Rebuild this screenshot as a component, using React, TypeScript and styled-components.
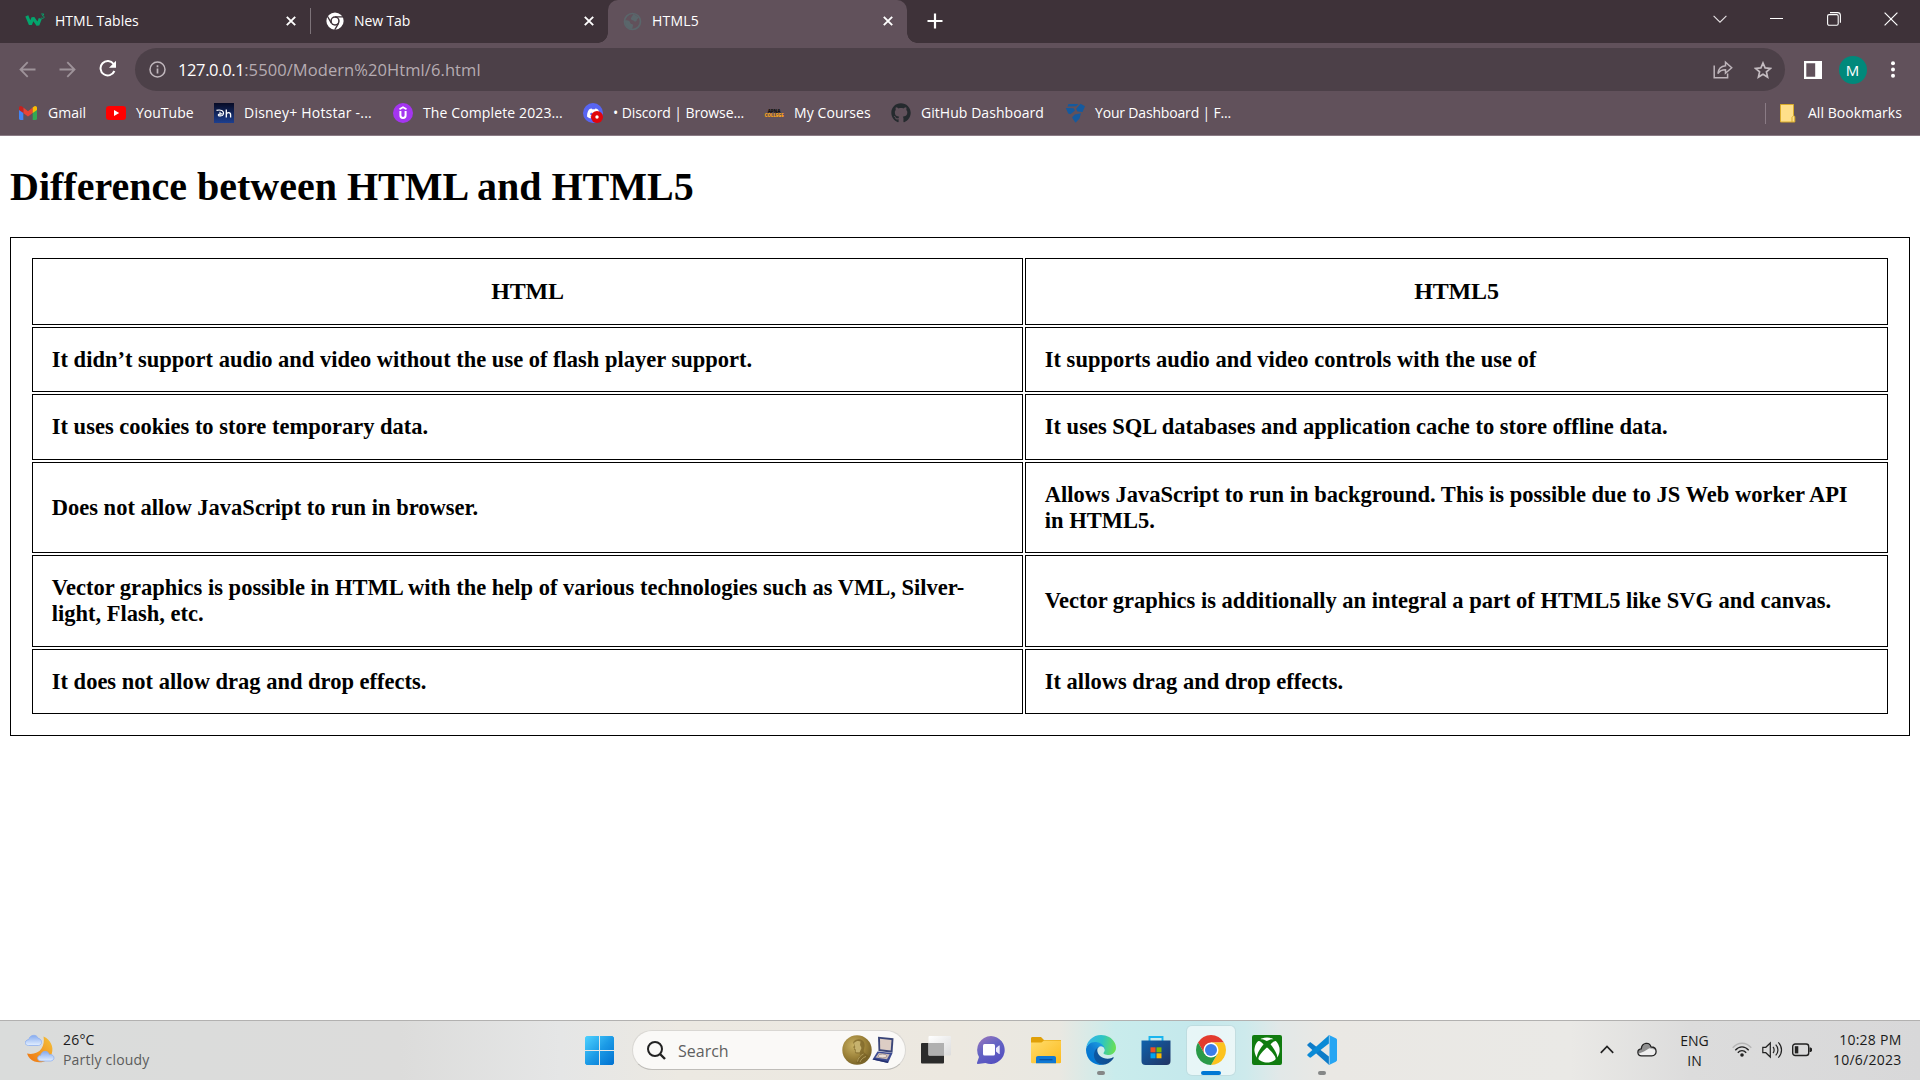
import React from "react";
import styled, { createGlobalStyle } from "styled-components";
import { FaDiscord, FaGithub, FaXbox } from "react-icons/fa";

const GlobalStyle = createGlobalStyle`
  * { box-sizing: border-box; }
  html, body { margin: 0; padding: 0; overflow: hidden; background: #fff; }
  svg { display: block; flex: none; }
`;

const ui = `"Open Sans", "Noto Sans", sans-serif`;

const Screen = styled.div`
  width: 1920px;
  height: 1080px;
  display: flex;
  flex-direction: column;
  background: #fff;
  font-family: ${ui};
  font-size: 14px;
  line-height: 20px;
`;

/* ---------- browser chrome ---------- */

const TabStrip = styled.div`
  height: 43px;
  display: flex;
  background: #3e3239;
  color: #fff;
`;

const Tab = styled.div<{ $width: number; $active?: boolean }>`
  position: relative;
  width: ${(p) => p.$width}px;
  height: 43px;
  padding: 0 14.5px 1px 15px;
  display: flex;
  align-items: center;
  border-radius: 10px 10px 0 0;
  background: ${(p) => (p.$active ? "#61515b" : "transparent")};

  &::before,
  &::after {
    content: "";
    display: ${(p) => (p.$active ? "block" : "none")};
    position: absolute;
    bottom: 0;
    width: 10px;
    height: 10px;
  }
  &::before {
    left: -10px;
    background: radial-gradient(circle at 0 0, transparent 9.5px, #61515b 10px);
  }
  &::after {
    right: -10px;
    background: radial-gradient(circle at 100% 0, transparent 9.5px, #61515b 10px);
  }
`;

const FirstTab = styled(Tab)`
  padding-left: 25px;
`;

const TabIcon = styled.span`
  width: 20px;
  flex: none;
`;

const TabTitle = styled.span<{ $gap: number; $spacing?: number }>`
  flex: 1;
  margin-left: ${(p) => p.$gap}px;
  letter-spacing: ${(p) => p.$spacing ?? 0}px;
  white-space: nowrap;
`;

const TabDivider = styled.div`
  width: 1px;
  height: 26px;
  margin-top: 8px;
  background: #7d7379;
`;

const NewTabButton = styled.div`
  padding: 13px 0 0 20px;
`;

const WindowControls = styled.div`
  margin-left: auto;
  height: 37px;
  display: flex;
  align-items: center;
  gap: 43.5px;
  padding-right: 22px;
`;

const Toolbar = styled.div`
  height: 53px;
  padding: 0 20px 0 19px;
  display: flex;
  align-items: center;
  background: #61515b;
`;

const NavButtons = styled.div`
  width: 116px;
  display: flex;
  align-items: center;
  gap: 23px;
  padding-bottom: 1px;
`;

const AddressBar = styled.div`
  width: 1650px;
  height: 43px;
  padding: 0 13px 0 14px;
  display: flex;
  align-items: center;
  border-radius: 22px;
  background: #4c4048;
`;

const Url = styled.div`
  flex: 1;
  margin-left: 12px;
  font-size: 16.5px;
  line-height: 24px;
  letter-spacing: 0.08px;
  color: #b6acb2;
`;

const Host = styled.span`
  letter-spacing: -0.38px;
  color: #fff;
`;

const AddressActions = styled.div`
  display: flex;
  align-items: center;
  gap: 21px;
`;

const ToolbarActions = styled.div`
  flex: 1;
  display: flex;
  align-items: center;
  padding-left: 18.5px;
`;

const Avatar = styled.div`
  width: 28px;
  height: 28px;
  margin: 0 23px 0 17px;
  border-radius: 50%;
  background: #00897b;
  color: #fff;
  font-size: 15px;
  line-height: 28px;
  text-align: center;
`;

const BookmarkBar = styled.div`
  height: 40px;
  padding: 0 18px 5px 18px;
  display: flex;
  align-items: center;
  background: #61515b;
  border-bottom: 1px solid #8a7b85;
  color: #fff;
`;

const Bookmark = styled.div<{ $width: number; $spacing?: number }>`
  width: ${(p) => p.$width}px;
  display: flex;
  align-items: center;
  gap: 10px;
  white-space: nowrap;
  letter-spacing: ${(p) => p.$spacing ?? 0}px;
`;

const AllBookmarks = styled.div`
  margin-left: auto;
  height: 21px;
  padding-left: 12px;
  display: flex;
  align-items: center;
  gap: 10px;
  letter-spacing: 0.06px;
  border-left: 1px solid #8a7b85;
`;

/* ---------- page ---------- */

const Page = styled.main`
  height: 884px;
  padding: 0 10px;
  font-family: "Liberation Serif", "Times New Roman", serif;
  color: #000;
`;

const Heading = styled.h1`
  height: 101px;
  margin: 0;
  padding-top: 28px;
  font-size: 40px;
  line-height: 46px;
`;

const Table = styled.table`
  width: 1900px;
  height: 499px;
  display: block;
  border: 1px solid #000;
  padding: 20px 21px;
`;

const Rows = styled.tbody`
  display: grid;
  gap: 2px;
  grid-template-rows: 67px 65px 66px 91px 92px 65px;
`;

const Row = styled.tr`
  display: grid;
  grid-template-columns: 991px 863px;
  gap: 2px;
`;

const HeadCell = styled.th`
  display: flex;
  align-items: center;
  justify-content: center;
  border: 1px solid #000;
  font-size: 24px;
  line-height: 27px;
  letter-spacing: -0.15px;
`;

const Cell = styled.td`
  display: flex;
  align-items: center;
  border: 1px solid #000;
  padding: 0 19px 0 18.75px;
  font-size: 22.5px;
  font-weight: 700;
  line-height: 26px;
`;

/* ---------- taskbar ---------- */

const Taskbar = styled.div`
  height: 60px;
  display: flex;
  border-top: 1px solid #b2b1b0;
  background: linear-gradient(
    90deg,
    #dadcdb 0,
    #dcdcdb 400px,
    #e5e6e6 560px,
    #ece9e2 680px,
    #ece8e0 960px,
    #e9e8e2 1060px,
    #c9ecec 1115px,
    #c4e8ec 1200px,
    #cdeaec 1245px,
    #e2e8e8 1280px,
    #eae8e4 1330px,
    #eae9e6 1570px,
    #dcdcdc 1690px,
    #d8d8d9 1920px
  );
  color: #1b1b1b;
`;

const Weather = styled.div`
  width: 585px;
  padding: 9px 0 0 24px;
  display: flex;
  gap: 8px;
`;

const WeatherIconBox = styled.div`
  padding: 4px 0 0 1px;
`;

const WeatherText = styled.div`
  display: flex;
  flex-direction: column;
  letter-spacing: 0.2px;
  margin-left: -1px;
`;

const Muted = styled.span`
  color: #5c5c5c;
`;

const SearchBox = styled.div`
  width: 274px;
  height: 40px;
  margin: 9px 0 0 14px;
  padding: 0 11px 0 14px;
  display: flex;
  align-items: center;
  border: 1px solid #d9d7d3;
  border-bottom-color: #bfbdb9;
  border-radius: 20px;
  background: #faf9f7;
`;

const SearchText = styled.span`
  flex: 1;
  margin-left: 12px;
  padding-top: 2px;
  font-size: 16px;
  line-height: 24px;
  color: #5f5f5f;
`;

const AppRow = styled.div`
  display: flex;
  gap: 7.1px;
  padding: 5px 0 0 6px;
`;

const AppTile = styled.div<{ $active?: boolean }>`
  width: 48px;
  height: 49px;
  padding-top: 9px;
  display: flex;
  flex-direction: column;
  align-items: center;
  justify-content: space-between;
  border-radius: 5px;
  background: ${(p) => (p.$active ? "rgba(255,255,255,0.6)" : "transparent")};
  box-shadow: ${(p) => (p.$active ? "0 0 0 1px rgba(180,200,204,0.35)" : "none")};
`;

const Indicator = styled.div<{ $active?: boolean }>`
  width: ${(p) => (p.$active ? 20 : 8)}px;
  height: 4px;
  border-radius: 2px;
  background: ${(p) => (p.$active ? "#0078d4" : "#858787")};
`;

const XboxTile = styled.div`
  width: 30px;
  height: 30px;
  padding: 2px;
  border-radius: 2px;
  background: #107c10;
  color: #fff;
`;

const Tray = styled.div`
  margin-left: auto;
  display: flex;
  align-items: flex-start;
  padding-right: 18.5px;
`;

const TrayIcon = styled.div<{ $top: number; $width: number }>`
  width: ${(p) => p.$width}px;
  padding-top: ${(p) => p.$top}px;
`;

const TrayText = styled.div<{ $align: "center" | "right"; $width: number }>`
  width: ${(p) => p.$width}px;
  padding-top: 10px;
  text-align: ${(p) => p.$align};
`;

const Language = styled(TrayText)`
  margin-right: 15px;
`;

const Clock = styled(TrayText)`
  padding-top: 9px;
  letter-spacing: 0.25px;
`;

/* ---------- icons ---------- */

const CloseIcon = () => (
  <svg width="10" height="10" viewBox="0 0 10 10" stroke="#fff" strokeWidth="1.9">
    <path d="M.8.8l8.4 8.4M9.2.8L.8 9.2" />
  </svg>
);

const W3Icon = () => (
  <svg width="20" height="16" viewBox="0 0 20 16" fill="none" stroke="#04a56d">
    <path d="M1.800 2.800L5.400 11.500 8 4.800 12.800 11.800 15.300 5.500" strokeWidth="3.200" strokeLinejoin="bevel" />
    <path d="M16.200 1h2.600l-1.400 1.800c1.400 0 1.900.8 1.600 1.700-.4 1.100-2 1.100-2.900.3" strokeWidth="1" />
  </svg>
);

const ChromeMono = () => (
  <svg width="18" height="18" viewBox="0 0 48 48">
    <circle cx="24" cy="24" r="23" fill="#fff" />
    <circle cx="24" cy="24" r="12.5" fill="#3e3239" />
    <circle cx="24" cy="24" r="8.5" fill="#fff" />
    <path d="M24 12.8h21M14.3 29.6L3.8 11.4M33.7 29.6L23.2 47.8" stroke="#3e3239" strokeWidth="3.5" />
  </svg>
);

const GlobeIcon = () => (
  <svg width="19" height="19" viewBox="0 0 19 19">
    <circle cx="9.500" cy="9.500" r="8" fill="none" stroke="#5a666b" strokeWidth="1.700" />
    <path d="M2 8.500c2.500-1 5 .3 5.200 2.300.2 1.500 1.800 1 2.500 1.700.8 1-.2 2-.5 4.500C5 17 1.500 13 2 8.500zM10.500 2l5.300 3.500-1.500 1.800c-.8.700-.2 1.900-1.600 2.200-1.600.2-1.700-1-3.200-1.300-1.400-.4-2.200-1.500-1.200-2.700z" fill="#5a666b" />
  </svg>
);

const ArrowIcon = ({ flip }: { flip?: boolean }) => (
  <svg width="17" height="17" viewBox="0 0 17 17" fill="none" stroke="#9e939a" strokeWidth="1.8">
    <path d={flip ? "M.5 8.5h15M8.3 1.2l7.2 7.3-7.2 7.3" : "M16.5 8.5h-15M8.7 1.2L1.5 8.5l7.2 7.3"} />
  </svg>
);

const ReloadIcon = () => (
  <svg width="20" height="18" viewBox="0 0 20 18">
    <path d="M14.600 4A7.200 7.200 0 1 0 15.400 11" fill="none" stroke="#fff" strokeWidth="2" />
    <path d="M17 .8v7H10z" fill="#fff" />
  </svg>
);

const InfoIcon = () => (
  <svg width="17" height="17" viewBox="0 0 17 17" fill="none" stroke="#c0b7bd">
    <circle cx="8.5" cy="8.5" r="7.5" strokeWidth="1.5" />
    <path d="M8.5 7.5v5M8.5 4.3v1.9" strokeWidth="1.7" />
  </svg>
);

const ShareIcon = () => (
  <svg width="20" height="19" viewBox="0 0 20 19" fill="none" stroke="#bdb4ba" strokeWidth="1.5">
    <path d="M1.2 5.6v12.2h13.4v-4.3" />
    <path d="M4.9 13.6c.5-5 3.4-7.4 7.6-7.8V2.2l6.2 5.6-6.2 5.4V9.8c-3.6 0-5.8 1-7.6 3.8z" />
  </svg>
);

const StarIcon = () => (
  <svg width="18" height="18" viewBox="0 0 18 18" fill="none" stroke="#c3bbc0" strokeWidth="1.7">
    <path d="M9 2l2.1 4.9 5.3.5-4 3.5 1.2 5.2L9 13.3l-4.6 2.8 1.2-5.2-4-3.5 5.3-.5z" />
  </svg>
);

const SidePanelIcon = () => (
  <svg width="18" height="18" viewBox="0 0 18 18">
    <path d="M0 0h18v18H0zM2.3 2.3v13.4h8.9V2.3z" fill="#fff" fillRule="evenodd" />
  </svg>
);

const GmailIcon = () => (
  <svg width="20" height="20" viewBox="0 0 20 20">
    <path d="M1 5v10.6c0 .8.5 1.4 1.3 1.4h3V9L1 5z" fill="#4285f4" />
    <path d="M19 5v10.6c0 .8-.5 1.4-1.3 1.4h-3V9L19 5z" fill="#34a853" />
    <path d="M5.3 10V4.6L10 8.2l4.7-3.6V10L10 13.5z" fill="#ea4335" />
    <path d="M1 7V5c0-1.9 2-2.5 3.4-1.3l.9.8V10z" fill="#c5221f" />
    <path d="M19 7V5c0-1.9-2-2.5-3.4-1.3l-.9.8V10z" fill="#fbbc04" />
  </svg>
);

const YouTubeIcon = () => (
  <svg width="20" height="20" viewBox="0 0 20 20">
    <rect y="3" width="20" height="14" rx="3.2" fill="#f00" />
    <path d="M8 7v6l5.2-3z" fill="#fff" />
  </svg>
);

const HotstarIcon = () => (
  <svg width="20" height="20" viewBox="0 0 20 20">
    <defs>
      <linearGradient id="hs" x1="0" y1="0" x2="0" y2="1">
        <stop offset="0" stopColor="#070b25" />
        <stop offset="1" stopColor="#1d3f8f" />
      </linearGradient>
    </defs>
    <rect width="20" height="20" fill="url(#hs)" />
    <path d="M2.500 7.400c4-1.200 7.600.4 7 3.600-.5 2.300-5.500 2.800-5.200.9.200-1.200 2.800-1.100 4.200-1M6 8.800v3.600" fill="none" stroke="#fff" strokeWidth="1.100" />
    <path d="M12.300 6.500v8M12.300 11.500c.6-2.400 4.300-2.500 4.300.3v2.700" fill="none" stroke="#fff" strokeWidth="1.300" />
  </svg>
);

const UdemyIcon = () => (
  <svg width="20" height="20" viewBox="0 0 20 20">
    <circle cx="10" cy="10" r="10" fill="#a435f0" />
    <path d="M6.500 6.300L10 4.200l3.500 2.100" fill="none" stroke="#fff" strokeWidth="1.600" />
    <path d="M7.400 8v4.300c0 3.700 5.200 3.700 5.200 0V8" fill="none" stroke="#fff" strokeWidth="2" />
  </svg>
);

const DiscordIcon = () => (
  <svg width="20" height="20" viewBox="0 0 20 20">
    <circle cx="10" cy="10" r="10" fill="#5865f2" />
    <FaDiscord x="3.500" y="3.500" width="13" height="13" color="#fff" />
    <circle cx="14" cy="14" r="6" fill="#e0050c" />
    <circle cx="14" cy="14" r="1.700" fill="#fff" />
  </svg>
);

const ApnaLabel = styled.span`
  width: 20px;
  display: flex;
  flex-direction: column;
  align-items: center;
  font: 700 4.500px/4.500px "Open Sans", sans-serif;
  letter-spacing: -0.150px;
`;
const Dark = styled.b`
  color: #111;
`;
const Amber = styled.b`
  color: #f5a01a;
`;

const KiteIcon = () => (
  <svg width="20" height="20" viewBox="0 0 20 20" fill="#155a9e">
    <path d="M3.500 1h10l-2.500 2.200-8.500.3zM15.500.8L20 3.200 17.500 9l-5-.5-1.500-2.500zM.8 5l7.700.2 1.500 2.300-4.500 3.800-2.300-.8zM9.800 11.500l6.200-1.200-1.500 5.200-4 4.300-3.500-5.300z" />
  </svg>
);

const FolderIcon = () => (
  <svg width="20" height="20" viewBox="0 0 20 20">
    <path d="M2.500 1.500h13v11l1.300 1v5.500H2.500z" fill="#ffe08a" stroke="#d9ac2b" strokeWidth="1" />
    <path d="M14 19v-4.500l1.500-1.800" fill="none" stroke="#d9ac2b" strokeWidth="1" />
  </svg>
);

const WeatherIcon = () => (
  <svg width="31" height="30" viewBox="0 0 31 30">
    <defs>
      <linearGradient id="moon" x1="1" y1="0" x2="0" y2="1">
        <stop offset="0" stopColor="#f5c33a" />
        <stop offset="1" stopColor="#ee7412" />
      </linearGradient>
      <linearGradient id="cld" x1="0" y1="0" x2="0" y2="1">
        <stop offset="0" stopColor="#86abef" />
        <stop offset="1" stopColor="#e3efff" />
      </linearGradient>
    </defs>
    <path d="M18.500 2.500c7 3 10.500 10.500 8.300 17C24.500 26.500 17 30 9.500 27.500 6 26.200 3.300 23.500 2 19.500c5.500 1.300 11.500-.3 14.500-5 2.300-3.600 2.800-8 2-12z" fill="url(#moon)" />
    <path d="M3.500 11.500c-4.300 0-4.300-5.500.3-6C4.800.3 12 0 13 4.300c4.500.3 4.800 7.200.3 7.200z" fill="url(#cld)" stroke="#8eb0f0" strokeWidth=".8" />
    <path d="M16 27c-4.300 0-4.600-5.500-.3-5.800.8-5 7.600-5 8.500-.8 6-.3 6.300 6.300 1.300 6.600z" fill="url(#cld)" stroke="#8eb0f0" strokeWidth=".8" />
  </svg>
);

const WindowsIcon = () => (
  <svg width="30" height="30" viewBox="0 0 30 30">
    <defs>
      <linearGradient id="win" gradientUnits="userSpaceOnUse" x1="0" y1="0" x2="29" y2="29">
        <stop offset="0" stopColor="#4fd2ff" />
        <stop offset=".5" stopColor="#1c9be6" />
        <stop offset="1" stopColor="#0070d0" />
      </linearGradient>
    </defs>
    <path d="M1.500 0H14v14H0V1.500zM15 0h12.500L29 1.500V14H15zM0 15h14v14H1.500L0 27.500zM15 15h14v12.500L27.500 29H15z" fill="url(#win)" />
  </svg>
);

const MedalIcon = () => (
  <svg width="30" height="30" viewBox="0 0 30 30">
    <defs>
      <radialGradient id="medal" cx=".38" cy=".35" r=".7">
        <stop offset="0" stopColor="#c9b264" />
        <stop offset=".6" stopColor="#9b8138" />
        <stop offset="1" stopColor="#756026" />
      </radialGradient>
    </defs>
    <circle cx="15" cy="15" r="14.700" fill="url(#medal)" />
    <path d="M11 7.500c2.500-4.500 10.500-4.500 11.500 1.500.5 3.500-1.500 5.500-.5 8.500l4.500 3.500c-2.500 4.500-7 7-12 7 .3-3 1.500-5.500 3.500-7.500l-.5-2.500c-1.500.8-4 .8-4.500-.5l.2-2-1.200-1 .5-1.500-1.500-.5 1.500-2.500z" fill="#6f5a20" opacity=".55" />
    <path d="M12 8c2-2.500 5-2.500 6.500-1.500l-.5 3.500 1.500 3-2 4.500-3.800-.3.200-2.500-1-1 .3-2z" fill="#d3c07c" opacity=".8" />
    <path d="M15.500 26.500c.5-3.500 3-6 6-7.500M18 27c1-2.500 3-4.500 6-5.500" stroke="#d0bd7b" strokeWidth="1" opacity=".6" fill="none" />
  </svg>
);

const CaseIcon = () => (
  <svg width="22" height="28" viewBox="0 0 22 28">
    <path d="M6 .8l15.500 1.500-1 14.500-14-1.800z" fill="#3a4578" />
    <path d="M8 2.800l11.500 1.200-.8 10.500-10.500-1.300z" fill="#dccdc4" />
    <path d="M5.500 15.500l15 1.500-4.500 10L.5 23.500z" fill="#3b4a91" />
    <path d="M6.800 17l11 1.200-2.800 5L3.500 21.500z" fill="#c9bab5" />
    <ellipse cx="10.500" cy="20" rx="4.300" ry="1.900" fill="#e8ded6" stroke="#8b7878" strokeWidth=".6" />
    <path d="M.5 23.500L16 27l.3-1.500-14-3z" fill="#24306e" />
  </svg>
);

const MagnifierIcon = () => (
  <svg width="19" height="19" viewBox="0 0 19 19" fill="none" stroke="#222">
    <circle cx="8" cy="8" r="7" strokeWidth="2" />
    <path d="M13 13l5 5" strokeWidth="2.400" />
  </svg>
);

const TaskViewIcon = () => (
  <svg width="30" height="30" viewBox="0 0 30 30">
    <defs>
      <linearGradient id="tv" x1="0" y1="0" x2="1" y2="1">
        <stop offset="0" stopColor="#fff" />
        <stop offset="1" stopColor="#dcdcdc" />
      </linearGradient>
    </defs>
    <rect y="8" width="23" height="20.500" rx="1" fill="#2b2b2b" />
    <rect x="7.500" y="1" width="22.500" height="19.500" rx="1" fill="url(#tv)" />
    <rect x="7.500" y="8" width="15.500" height="12.500" fill="#b0b0b0" />
  </svg>
);

const ChatIcon = () => (
  <svg width="30" height="30" viewBox="0 0 30 30">
    <defs>
      <linearGradient id="chat" x1="0" y1="0" x2=".6" y2="1">
        <stop offset="0" stopColor="#a078ba" />
        <stop offset=".5" stopColor="#6464c4" />
        <stop offset="1" stopColor="#5550c0" />
      </linearGradient>
    </defs>
    <path d="M15 1a14 14 0 1 1-5.500 27L1.800 29c-.8 0-1-.5-.8-1.200L3 22A14 14 0 0 1 15 1z" fill="url(#chat)" />
    <rect x="7" y="9" width="12" height="11.500" rx="1.500" fill="#fff" />
    <path d="M20 13l3-2.500h.7v8.500H23l-3-2.500z" fill="#e9e8fb" />
  </svg>
);

const ExplorerIcon = () => (
  <svg width="30" height="30" viewBox="0 0 30 30">
    <defs>
      <linearGradient id="exp" x1="0" y1="0" x2="1" y2="1">
        <stop offset="0" stopColor="#ffdc6b" />
        <stop offset="1" stopColor="#fcbb1f" />
      </linearGradient>
    </defs>
    <path d="M0 3.500C0 2.500.6 2 1.500 2H10l3 3h17v3H0z" fill="#e0a008" />
    <path d="M0 7.500h10.500l2.500-2h17V27c0 .8-.4 1.200-1.200 1.200H1.200C.4 28.200 0 27.800 0 27z" fill="url(#exp)" />
    <path d="M5 28.200V23c0-1.300.8-2 2-2h16c1.200 0 2 .7 2 2v5.200z" fill="#0f78d4" />
    <path d="M8.500 24.700h13" stroke="#0a4f9e" strokeWidth="1.200" />
  </svg>
);

const EdgeIcon = () => (
  <svg width="30" height="30" viewBox="0 0 256 256">
    <defs>
      <linearGradient id="e1" x1="63" y1="178" x2="241" y2="178" gradientUnits="userSpaceOnUse">
        <stop offset="0" stopColor="#0c59a4" />
        <stop offset="1" stopColor="#114a8b" />
      </linearGradient>
      <linearGradient id="e2" x1="157" y1="99" x2="46" y2="220" gradientUnits="userSpaceOnUse">
        <stop offset="0" stopColor="#1b9de2" />
        <stop offset=".5" stopColor="#0f7bd0" />
        <stop offset="1" stopColor="#0078d4" />
      </linearGradient>
      <linearGradient id="e3" x1="10" y1="60" x2="250" y2="110" gradientUnits="userSpaceOnUse">
        <stop offset="0" stopColor="#35b5ea" />
        <stop offset=".5" stopColor="#2cc4c4" />
        <stop offset="1" stopColor="#6be052" />
      </linearGradient>
    </defs>
    <path d="M231 190.500c-3.400 1.800-6.900 3.400-10.500 4.700a101.900 101.900 0 0 1-35.900 6.500c-47.300 0-88.500-32.500-88.500-74.300a31.500 31.500 0 0 1 16.400-27.300c-42.800 1.800-53.800 46.400-53.800 72.500 0 74 68.100 81.400 82.800 81.400 7.900 0 19.800-2.300 27-4.600l1.300-.4a128.300 128.300 0 0 0 66.600-52.800 4 4 0 0 0-5.400-5.700z" fill="url(#e1)" />
    <path d="M105.700 241.400a79.200 79.200 0 0 1-22.700-21.300 80.700 80.700 0 0 1 29.500-120c3.200-1.500 8.500-4.100 15.600-4a32.400 32.400 0 0 1 25.700 13 31.900 31.900 0 0 1 6.300 18.700c0-.2 24.500-79.600-80-79.600-43.900 0-80 41.700-80 78.200a130.200 130.200 0 0 0 12.100 56 128 128 0 0 0 156.400 67 75.500 75.500 0 0 1-62.800-8z" fill="url(#e2)" />
    <path d="M152.300 148.900c-.9 1-3.400 2.500-3.400 5.600 0 2.600 1.700 5.200 4.800 7.300 14.300 10 41.400 8.600 41.500 8.600a59.600 59.600 0 0 0 30.300-8.300 61.400 61.400 0 0 0 30.400-52.900c.3-22.400-8-37.300-11.300-43.900C223.500 23.900 177.700 0 128 0A128 128 0 0 0 0 126.200C.5 89.700 36.800 60.200 80 60.200c3.500 0 23.500.3 42 10 16.300 8.600 24.900 19 30.800 29.300 6.200 10.700 7.300 24.100 7.300 29.500s-2.700 13.300-7.800 19.900z" fill="url(#e3)" />
  </svg>
);

const StoreIcon = () => (
  <svg width="30" height="30" viewBox="0 0 30 30">
    <defs>
      <linearGradient id="st" x1="0" y1="0" x2="1" y2="1">
        <stop offset="0" stopColor="#0f62ad" />
        <stop offset="1" stopColor="#223463" />
      </linearGradient>
    </defs>
    <path d="M8.500 7V2h13v5" fill="none" stroke="#19b5ee" strokeWidth="1.900" />
    <path d="M.5 5.500h29V26a4 4 0 0 1-4 4h-21a4 4 0 0 1-4-4z" fill="url(#st)" />
    <path d="M9.500 12.300h5v5h-5z" fill="#f25022" />
    <path d="M15.500 12.300h5v5h-5z" fill="#7fba00" />
    <path d="M9.500 18.300h5v5h-5z" fill="#00a4ef" />
    <path d="M15.500 18.300h5v5h-5z" fill="#ffb900" />
  </svg>
);

const ChromeIcon = () => (
  <svg width="30" height="30" viewBox="2 2 44 44">
    <path d="M4.950 13A22 22 0 0 1 43.050 13H24L14.470 29.500z" fill="#e33b2e" />
    <path d="M43.050 13A22 22 0 0 1 24 46L33.530 29.500 24 13z" fill="#fcc31e" />
    <path d="M24 46A22 22 0 0 1 4.950 13L14.470 29.500H33.530z" fill="#2a9a48" />
    <circle cx="24" cy="24" r="11" fill="#fff" />
    <circle cx="24" cy="24" r="8.800" fill="#3b7de9" />
  </svg>
);

const CodeIcon = () => (
  <svg width="30" height="30" viewBox="0 0 100 100">
    <path d="M2 31l6-5.500c2-1.500 4-1.500 6 0L73 72v27L2 36c-1.500-1.500-1.500-3.500 0-5z" fill="#0e7cc9" />
    <path d="M2 69l6 5.500c2 1.500 4 1.500 6 0L73 28V1L2 64c-1.500 1.500-1.500 3.500 0 5z" fill="#0a8ad6" />
    <path d="M75 99c-2 .8-4.500.3-6-1.200 2 2 6 .5 6-2.500V4.700C75 1.700 71 .2 69 2.200 70.500.7 73 .2 75 1l21 10c2 1 4 3 4 5.500v67c0 2.500-1.500 4.500-4 5.500z" fill="#27a5f3" />
  </svg>
);

const CloudIcon = () => (
  <svg width="20" height="15" viewBox="0 0 20 15">
    <path d="M4.500 13.800c-4.500 0-5-6.500-.3-7C5.200.300 12.300-.5 14 5c6.500-.2 6.800 8.800.8 8.800z" fill="#efefef" />
    <path d="M4.500 7C5.500 1 12 .5 13.600 5.400L7 9.500 2 11.500C.5 9.500 1.500 7.500 4.500 7z" fill="#8f8f8f" />
    <path d="M13.600 5.400c2.500-.2 4 .8 4.600 2.400L12 6.500z" fill="#b5b5b5" />
    <path d="M4.500 13.800c-4.500 0-5-6.500-.3-7C5.200.300 12.300-.5 14 5c6.500-.2 6.800 8.800.8 8.800z" fill="none" stroke="#222" strokeWidth="1.300" />
  </svg>
);

const WifiIcon = () => (
  <svg width="20" height="16" viewBox="0 0 20 16" fill="none" strokeWidth="1.300">
    <path d="M.7 5.800C6-.3 14-.3 19.300 5.800" stroke="#b5b5b5" />
    <path d="M3.300 8.300c4-4.500 9.400-4.500 13.400 0M5.800 10.800c2.500-2.800 5.900-2.800 8.400 0" stroke="#222" />
    <circle cx="10" cy="13" r="1.800" fill="#222" />
  </svg>
);

const SpeakerIcon = () => (
  <svg width="21" height="18" viewBox="0 0 21 18" fill="none" stroke="#222" strokeWidth="1.200">
    <path d="M.8 6.300h3L8.300 2v14L3.800 11.700h-3z" />
    <path d="M11 6c1.500 1.500 1.500 4.500 0 6M13.700 3.700c3 3 3 7.600 0 10.600M16.300 1.400c4.300 4.200 4.300 11 0 15.200" />
  </svg>
);

const BatteryIcon = () => (
  <svg width="21" height="14" viewBox="0 0 21 14">
    <rect x=".7" y="1" width="16" height="11.500" rx="2.500" fill="none" stroke="#222" strokeWidth="1.400" />
    <rect x="2.800" y="3.200" width="3.500" height="7.200" fill="#222" />
    <path d="M17.500 4.500h1.300l1.200 1v2.500l-1.200 1h-1.300z" fill="#222" />
  </svg>
);

const rows: [string, string][] = [
  [
    "It didn’t support audio and video without the use of flash player support.",
    "It supports audio and video controls with the use of",
  ],
  ["It uses cookies to store temporary data.", "It uses SQL databases and application cache to store offline data."],
  [
    "Does not allow JavaScript to run in browser.",
    "Allows JavaScript to run in background. This is possible due to JS Web worker API in HTML5.",
  ],
  [
    "Vector graphics is possible in HTML with the help of various technologies such as VML, Silver-light, Flash, etc.",
    "Vector graphics is additionally an integral a part of HTML5 like SVG and canvas.",
  ],
  ["It does not allow drag and drop effects.", "It allows drag and drop effects."],
];

export default function App() {
  return (
    <Screen>
      <GlobalStyle />
      <TabStrip>
        <FirstTab $width={310}>
          <TabIcon><W3Icon /></TabIcon>
          <TabTitle $gap={10}>HTML Tables</TabTitle>
          <CloseIcon />
        </FirstTab>
        <TabDivider />
        <Tab $width={297}>
          <TabIcon><ChromeMono /></TabIcon>
          <TabTitle $gap={8} $spacing={-0.1}>New Tab</TabTitle>
          <CloseIcon />
        </Tab>
        <Tab $width={299} $active>
          <TabIcon><GlobeIcon /></TabIcon>
          <TabTitle $gap={9} $spacing={0.2}>HTML5</TabTitle>
          <CloseIcon />
        </Tab>
        <NewTabButton>
          <svg width="16" height="16" viewBox="0 0 16 16" stroke="#fff" strokeWidth="2.2">
            <path d="M8 .5v15M.5 8h15" />
          </svg>
        </NewTabButton>
        <WindowControls>
          <svg width="14" height="8" viewBox="0 0 14 8" fill="none" stroke="#e6e2e4" strokeWidth="1.1">
            <path d="M.6.8L7 7.200 13.400.8" />
          </svg>
          <svg width="13" height="2" viewBox="0 0 13 2"><path d="M0 0h13v1H0z" fill="#fff" /></svg>
          <svg width="14" height="14" viewBox="0 0 14 14" fill="none" stroke="#fff" strokeWidth="1.1">
            <rect x=".6" y="2.600" width="10.600" height="10.600" rx="1.500" />
            <path d="M3 .6h7.500c1.800 0 2.900 1.100 2.900 2.900v7.300" />
          </svg>
          <svg width="14" height="14" viewBox="0 0 14 14" stroke="#fff" strokeWidth="1.200">
            <path d="M.6.6l12.800 12.800M13.400.6L.6 13.400" />
          </svg>
        </WindowControls>
      </TabStrip>

      <Toolbar>
        <NavButtons>
          <ArrowIcon />
          <ArrowIcon flip />
          <ReloadIcon />
        </NavButtons>
        <AddressBar>
          <InfoIcon />
          <Url><Host>127.0.0.1</Host>:5500/Modern%20Html/6.html</Url>
          <AddressActions><ShareIcon /><StarIcon /></AddressActions>
        </AddressBar>
        <ToolbarActions>
          <SidePanelIcon />
          <Avatar>M</Avatar>
          <svg width="6" height="18" viewBox="0 0 6 18" fill="#fff">
            <circle cx="3" cy="2.200" r="2" /><circle cx="3" cy="8.500" r="2" /><circle cx="3" cy="14.800" r="2" />
          </svg>
        </ToolbarActions>
      </Toolbar>

      <BookmarkBar>
        <Bookmark $width={88}><GmailIcon />Gmail</Bookmark>
        <Bookmark $width={108}><YouTubeIcon />YouTube</Bookmark>
        <Bookmark $width={179} $spacing={0.22}><HotstarIcon />Disney+ Hotstar -...</Bookmark>
        <Bookmark $width={190} $spacing={0.12}><UdemyIcon />The Complete 2023...</Bookmark>
        <Bookmark $width={181} $spacing={-0.1}><DiscordIcon />• Discord | Browse...</Bookmark>
        <Bookmark $width={127} $spacing={0.08}>
          <ApnaLabel><Dark>APNA</Dark><Amber>COLLEGE</Amber></ApnaLabel>My Courses
        </Bookmark>
        <Bookmark $width={174} $spacing={0.05}><FaGithub size={20} color="#252a2e" />GitHub Dashboard</Bookmark>
        <Bookmark $width={170} $spacing={-0.17}><KiteIcon />Your Dashboard | F...</Bookmark>
        <AllBookmarks><FolderIcon />All Bookmarks</AllBookmarks>
      </BookmarkBar>

      <Page>
        <Heading>Difference between HTML and HTML5</Heading>
        <Table>
          <Rows>
            <Row><HeadCell>HTML</HeadCell><HeadCell>HTML5</HeadCell></Row>
            {rows.map(([a, b]) => (
              <Row key={a}><Cell>{a}</Cell><Cell>{b}</Cell></Row>
            ))}
          </Rows>
        </Table>
      </Page>

      <Taskbar>
        <Weather>
          <WeatherIconBox><WeatherIcon /></WeatherIconBox>
          <WeatherText><span>26°C</span><Muted>Partly cloudy</Muted></WeatherText>
        </Weather>
        <TrayIcon $top={15} $width={33}><WindowsIcon /></TrayIcon>
        <SearchBox>
          <MagnifierIcon />
          <SearchText>Search</SearchText>
          <MedalIcon />
          <CaseIcon />
        </SearchBox>
        <AppRow>
          <AppTile><TaskViewIcon /></AppTile>
          <AppTile><ChatIcon /></AppTile>
          <AppTile><ExplorerIcon /></AppTile>
          <AppTile><EdgeIcon /><Indicator /></AppTile>
          <AppTile><StoreIcon /></AppTile>
          <AppTile $active><ChromeIcon /><Indicator $active /></AppTile>
          <AppTile><XboxTile><FaXbox size={26} /></XboxTile></AppTile>
          <AppTile><CodeIcon /><Indicator /></AppTile>
        </AppRow>
        <Tray>
          <TrayIcon $top={24} $width={37}>
            <svg width="14" height="9" viewBox="0 0 14 9" fill="none" stroke="#222" strokeWidth="1.700">
              <path d="M.8 7.800L7 1.500l6.200 6.300" />
            </svg>
          </TrayIcon>
          <TrayIcon $top={21} $width={36}><CloudIcon /></TrayIcon>
          <Language $align="center" $width={44}>ENG<br />IN</Language>
          <TrayIcon $top={21} $width={30}><WifiIcon /></TrayIcon>
          <TrayIcon $top={20} $width={30}><SpeakerIcon /></TrayIcon>
          <TrayIcon $top={22} $width={30}><BatteryIcon /></TrayIcon>
          <Clock $align="right" $width={80}>10:28 PM<br />10/6/2023</Clock>
        </Tray>
      </Taskbar>
    </Screen>
  );
}
